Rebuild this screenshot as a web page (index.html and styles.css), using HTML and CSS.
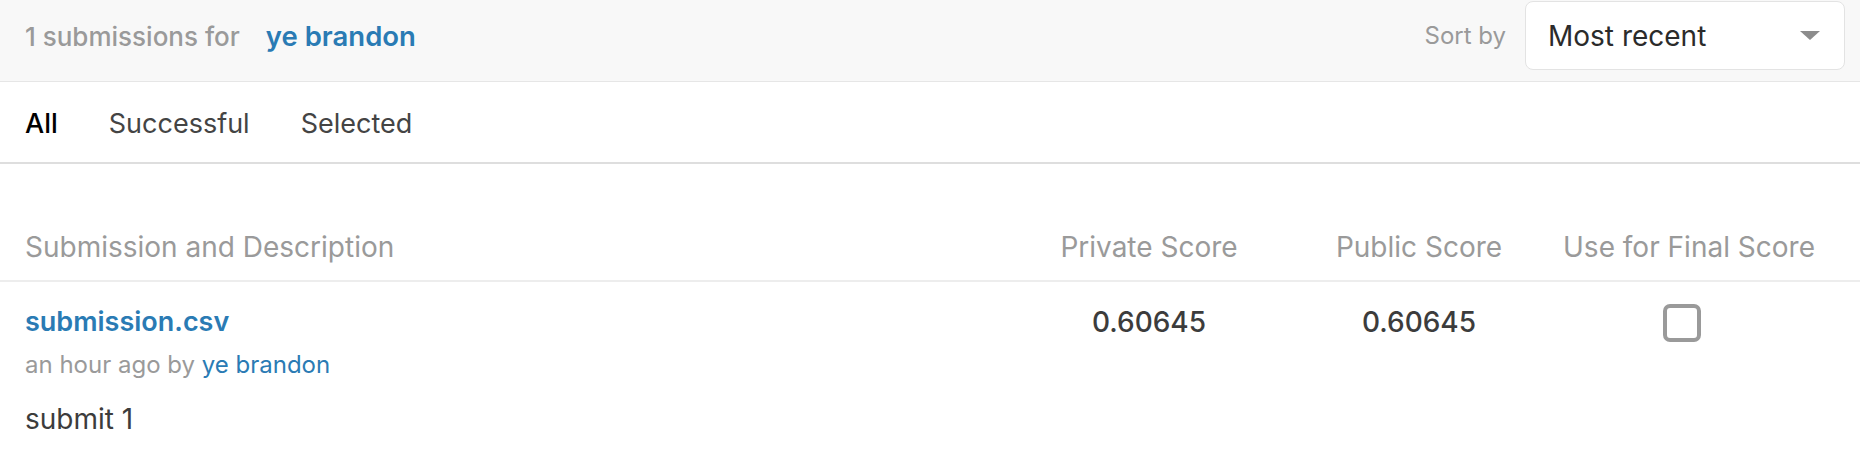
FILE: index.html
```html
<!DOCTYPE html>
<html lang="en">
<head>
<meta charset="utf-8">
<title>Submissions</title>
<link rel="stylesheet" href="styles.css">
</head>
<body>
<div class="page">
  <header class="topbar">
    <div class="title">
      <span class="count">1 submissions for</span>
      <a class="user" href="#">ye brandon</a>
    </div>
    <div class="sort">
      <span class="sort-label">Sort by</span>
      <div class="select">
        <span class="select-value">Most recent</span>
        <span class="caret"></span>
      </div>
    </div>
  </header>

  <nav class="tabs">
    <a class="tab active" href="#">All</a>
    <a class="tab" href="#">Successful</a>
    <a class="tab" href="#">Selected</a>
  </nav>

  <div class="table">
    <div class="row head">
      <div class="cell desc">Submission and Description</div>
      <div class="cell num">Private Score</div>
      <div class="cell num">Public Score</div>
      <div class="cell num">Use for Final Score</div>
    </div>
    <div class="row item">
      <div class="cell desc">
        <a class="file" href="#">submission.csv</a>
        <div class="meta">an hour ago by <a class="meta-user" href="#">ye brandon</a></div>
        <div class="note">submit 1</div>
      </div>
      <div class="cell num score">0.60645</div>
      <div class="cell num score">0.60645</div>
      <div class="cell num"><span class="checkbox"></span></div>
    </div>
  </div>
</div>
</body>
</html>
```

FILE: styles.css
```css
* { box-sizing: border-box; }

html, body {
  margin: 0;
  padding: 0;
  background: #ffffff;
}

body {
  font-family: Inter, "Noto Sans", "Liberation Sans", sans-serif;
  color: #3c3c3c;
  font-size: 28px;
}

a { text-decoration: none; }

.topbar {
  display: flex;
  align-items: center;
  justify-content: space-between;
  background: #f8f8f8;
  height: 82px;
  padding: 1px 15px 11px 25px;
  border-bottom: 1px solid #e6e6e6;
}

.title {
  display: flex;
  align-items: baseline;
  gap: 26px;
  font-weight: 500;
}

.count {
  color: #9a9a9a;
  font-size: 26px;
}

.user {
  color: #2a7bb4;
  font-weight: 600;
  font-size: 27.5px;
}

.sort {
  display: flex;
  align-items: center;
  gap: 19px;
}

.sort-label {
  color: #9a9a9a;
  font-size: 24px;
}

.select {
  display: flex;
  align-items: center;
  justify-content: space-between;
  width: 320px;
  height: 69px;
  padding: 0 24px 0 22px;
  background: #ffffff;
  border: 1px solid #e3e3e3;
  border-radius: 8px;
  color: #2b2b2b;
}

.caret {
  width: 0;
  height: 0;
  border-left: 10px solid transparent;
  border-right: 10px solid transparent;
  border-top: 9px solid #8c8c8c;
}

.tabs {
  display: flex;
  align-items: center;
  gap: 51px;
  height: 82px;
  padding: 2px 25px 0;
  border-bottom: 2px solid #dedede;
}

.tab {
  color: #444444;
  font-size: 27px;
}

.tab.active { color: #000000; font-weight: 500; }

.row {
  display: grid;
  grid-template-columns: 1fr 270px 270px 270px;
  padding: 0 36px 0 25px;
}

.head {
  padding-top: 66px;
  padding-bottom: 16px;
  border-bottom: 2px solid #ededed;
  color: #9a9a9a;
  line-height: 34px;
}

.num { text-align: center; }

.item {
  padding-top: 23px;
  padding-bottom: 20px;
}

.file {
  display: block;
  color: #2a7bb4;
  font-weight: 600;
  font-size: 27px;
  line-height: 34px;
}

.meta {
  margin-top: 11px;
  font-size: 24px;
  line-height: 30px;
  color: #9a9a9a;
}

.meta-user { color: #2a7bb4; }

.note {
  margin-top: 22px;
  line-height: 34px;
  color: #3c3c3c;
}

.score {
  font-weight: 500;
  line-height: 34px;
  color: #3c3c3c;
}

.checkbox {
  display: inline-block;
  width: 38px;
  height: 38px;
  margin-top: -1px;
  margin-left: -14px;
  border: 4px solid #9a9a9a;
  border-radius: 7px;
  vertical-align: top;
}
```
